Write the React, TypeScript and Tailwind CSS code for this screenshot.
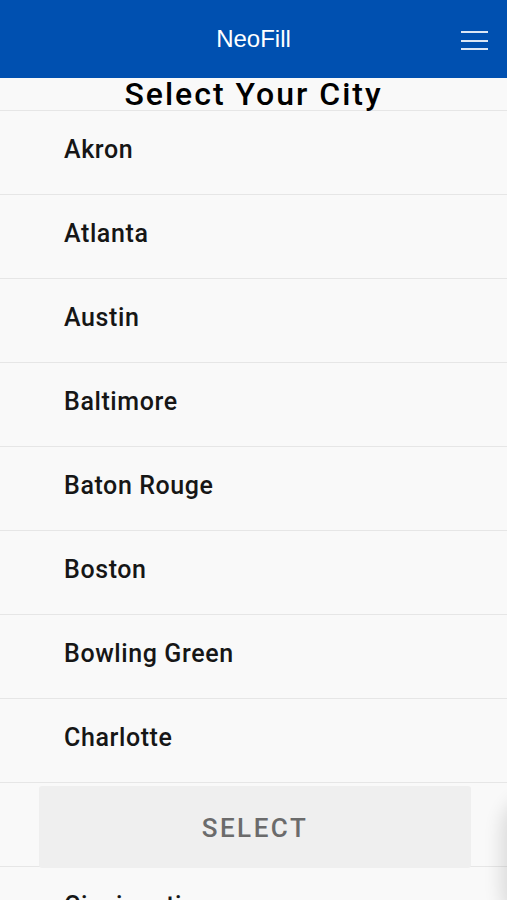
import React from 'react'

const cities = [
  'Akron',
  'Atlanta',
  'Austin',
  'Baltimore',
  'Baton Rouge',
  'Boston',
  'Bowling Green',
  'Charlotte',
  'Chicago',
  'Cincinnati',
]

const App = () => {
  return (
    <div className="relative h-[900px] w-full overflow-hidden bg-[#f9f9f9] font-['Roboto',sans-serif]">
      {/* top bar */}
      <header className="relative flex h-[78px] items-center justify-center bg-[#0050b0]">
        <span className="font-['Liberation_Sans',Arial,sans-serif] text-[24px] text-white">NeoFill</span>
        <button className="absolute right-[19px] top-[31px] flex w-[27px] flex-col gap-[6.5px]">
          <span className="block h-[2px] w-full bg-[#dbe6f5]" />
          <span className="block h-[2px] w-full bg-[#dbe6f5]" />
          <span className="block h-[2px] w-full bg-[#dbe6f5]" />
        </button>
      </header>

      <h1 className="h-[32px] text-center text-[32px] font-medium leading-[32px] tracking-[2px] text-black">
        Select Your City
      </h1>

      <ul className="border-t border-[#e6e6e6]">
        {cities.map((city) => (
          <li
            key={city}
            className="flex h-[84px] items-center border-b border-[#e6e6e6] pb-[6px] pl-[64px] text-[25px] font-medium tracking-[0.6px] text-[#161616]"
          >
            {city}
          </li>
        ))}
      </ul>

      {/* floating select button */}
      <button className="absolute left-[39px] top-[786px] flex h-[82px] w-[432px] items-center justify-center rounded-[3px] bg-[#efefef] pt-[2px] text-[26px] font-medium tracking-[2.5px] text-[#6b6b6b]">
        SELECT
      </button>

      {/* edge shadow of an off-screen element */}
      <div className="absolute right-[-60px] top-[800px] h-[120px] w-[60px] rounded-full bg-[#f9f9f9] shadow-[0_0_18px_6px_rgba(0,0,0,0.12)]" />
    </div>
  )
}

export default App
